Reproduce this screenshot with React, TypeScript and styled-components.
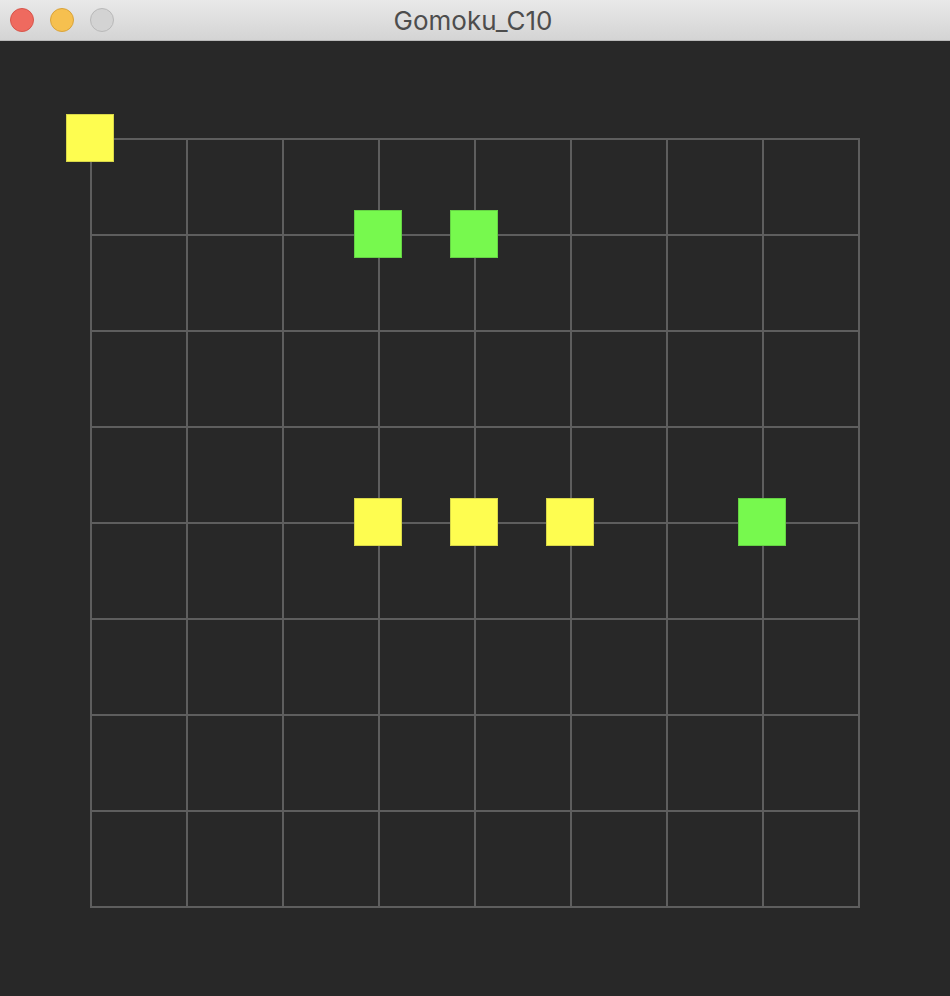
import styled, { createGlobalStyle } from "styled-components";

const GlobalStyle = createGlobalStyle`
  html, body {
    margin: 0;
    padding: 0;
    background: #282828;
  }
`;

type StoneColor = "yellow" | "green";

const stones: { col: number; row: number; color: StoneColor }[] = [
  { col: 0, row: 0, color: "yellow" },
  { col: 3, row: 1, color: "green" },
  { col: 4, row: 1, color: "green" },
  { col: 3, row: 4, color: "yellow" },
  { col: 4, row: 4, color: "yellow" },
  { col: 5, row: 4, color: "yellow" },
  { col: 7, row: 4, color: "green" },
];

const CELL = 96;
const SIZE = 8;

export default function App() {
  return (
    <>
      <GlobalStyle />
      <StyledWindow>
        <StyledTitleBar>
          <StyledLights>
            <StyledLight $kind="close" />
            <StyledLight $kind="min" />
            <StyledLight $kind="max" />
          </StyledLights>
          <StyledTitle>Gomoku_C10</StyledTitle>
          <div />
        </StyledTitleBar>
        <StyledContent>
          <StyledBoardWrap>
            <StyledBoard>
              {Array.from({ length: SIZE * SIZE }).map((_, i) => (
                <StyledCell key={i} />
              ))}
            </StyledBoard>
            {stones.map((s, i) => (
              <StyledStone
                key={i}
                $color={s.color}
                style={{ left: s.col * CELL - 24, top: s.row * CELL - 24 }}
              />
            ))}
          </StyledBoardWrap>
        </StyledContent>
      </StyledWindow>
    </>
  );
}

const StyledWindow = styled.div`
  width: 950px;
  height: 996px;
  display: flex;
  flex-direction: column;
  background: #282828;
  overflow: hidden;
`;

const StyledTitleBar = styled.div`
  height: 40px;
  flex-shrink: 0;
  display: grid;
  grid-template-columns: 1fr auto 1fr;
  align-items: center;
  background: linear-gradient(#e9e9e9, #d4d4d4);
  border-bottom: 1px solid #b9b9b9;
  box-sizing: content-box;
`;

const StyledLights = styled.div`
  display: flex;
  gap: 16px;
  padding-left: 10px;
`;

const lightColors = {
  close: { bg: "#ef6a5f", border: "#d7554b" },
  min: { bg: "#f6c04f", border: "#d9a33a" },
  max: { bg: "#d3d3d3", border: "#b9b9b9" },
};

const StyledLight = styled.span<{ $kind: keyof typeof lightColors }>`
  width: 24px;
  height: 24px;
  box-sizing: border-box;
  border-radius: 50%;
  background: ${(p) => lightColors[p.$kind].bg};
  border: 1px solid ${(p) => lightColors[p.$kind].border};
`;

const StyledTitle = styled.div`
  font-family: "Inter", "Liberation Sans", sans-serif;
  font-size: 26px;
  line-height: 30px;
  color: #4d4d4d;
  padding-right: 4px;
  padding-top: 2px;
`;

const StyledContent = styled.div`
  padding: 97px 0 0 90px;
`;

const StyledBoardWrap = styled.div`
  position: relative;
  width: ${CELL * SIZE + 2}px;
`;

const StyledBoard = styled.div`
  display: grid;
  grid-template-columns: repeat(${SIZE}, ${CELL}px);
  grid-auto-rows: ${CELL}px;
  width: ${CELL * SIZE}px;
  border-right: 2px solid #5e5e5e;
  border-bottom: 2px solid #5e5e5e;
`;

const StyledCell = styled.div`
  box-sizing: border-box;
  border-top: 2px solid #5e5e5e;
  border-left: 2px solid #5e5e5e;
`;

const StyledStone = styled.div<{ $color: StoneColor }>`
  position: absolute;
  width: 48px;
  height: 48px;
  box-sizing: border-box;
  background: ${(p) => (p.$color === "yellow" ? "#fefd50" : "#77f94e")};
  border: 1px solid
    ${(p) => (p.$color === "yellow" ? "#d8d74a" : "#66d245")};
`;
